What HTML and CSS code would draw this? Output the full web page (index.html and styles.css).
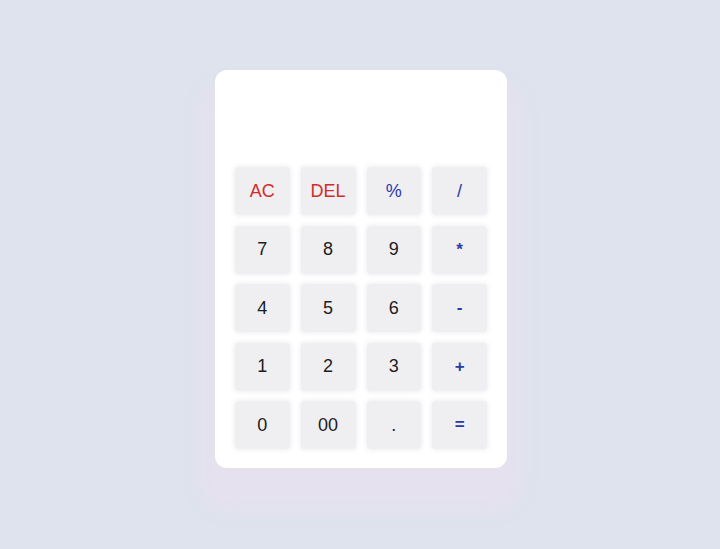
FILE: index.html
```html
<!DOCTYPE html>
<html>
<head>
<meta charset="utf-8">
<link rel="stylesheet" href="styles.css">
</head>
<body>
<div class="calc">
  <div class="display"></div>
  <div class="keys">
    <button class="key red">AC</button>
    <button class="key red">DEL</button>
    <button class="key blue">%</button>
    <button class="key blue">/</button>
    <button class="key">7</button>
    <button class="key">8</button>
    <button class="key">9</button>
    <button class="key blue op">*</button>
    <button class="key">4</button>
    <button class="key">5</button>
    <button class="key">6</button>
    <button class="key blue op">-</button>
    <button class="key">1</button>
    <button class="key">2</button>
    <button class="key">3</button>
    <button class="key blue op">+</button>
    <button class="key">0</button>
    <button class="key">00</button>
    <button class="key">.</button>
    <button class="key blue op">=</button>
  </div>
</div>
</body>
</html>
```
FILE: styles.css
```css
html, body {
  margin: 0;
  padding: 0;
  background: #dfe3ee;
  height: 100%;
}
body {
  display: flex;
  justify-content: center;
  padding-top: 70px;
  padding-left: 2px;
  box-sizing: border-box;
  font-family: "Liberation Sans", Arial, sans-serif;
}
.calc {
  width: 292px;
  height: 398px;
  box-sizing: border-box;
  background: #ffffff;
  border-radius: 12px;
  padding: 20px 20px 19px;
  box-shadow: 0 28px 16px 14px rgba(230, 224, 238, 0.85);
}
.display {
  height: 77px;
}
.keys {
  display: grid;
  grid-template-columns: repeat(4, 1fr);
  grid-auto-rows: 48px;
  column-gap: 11px;
  row-gap: 10.5px;
}
.key {
  border: none;
  background: #efeff2;
  border-radius: 4px;
  font-family: "Liberation Sans", Arial, sans-serif;
  font-size: 18px;
  color: #1d1d1d;
  box-shadow: 0 0 4px 1px rgba(236, 234, 240, 0.9);
  padding: 0;
}
.red { color: #d52a2a; }
.blue { color: #2a3aa8; }
.op { font-weight: bold; font-size: 17px; }
```
